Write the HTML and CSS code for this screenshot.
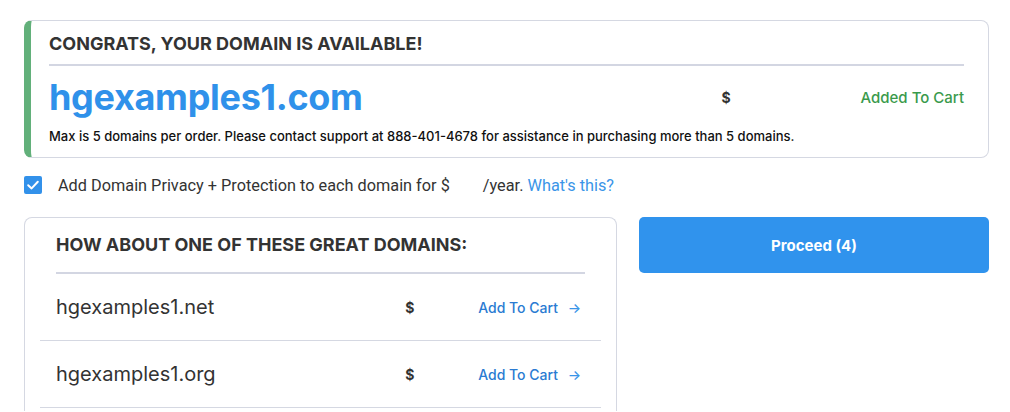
FILE: index.html
```html
<!DOCTYPE html>
<html>
<head>
  <meta charset="UTF-8" />
  <title>Domain Search</title>
  <link rel="stylesheet" href="styles.css">
</head>
<body>
  <div class="page">
    <div class="result-card">
      <h2 class="card-title">CONGRATS, YOUR DOMAIN IS AVAILABLE!</h2>
      <div class="result-row">
        <span class="domain-name">hgexamples1.com</span>
        <span class="price">$</span>
        <span class="added">Added To Cart</span>
      </div>
      <p class="limit-note">Max is 5 domains per order. Please contact support at 888-401-4678 for assistance in purchasing more than 5 domains.</p>
    </div>

    <label class="privacy">
      <span class="checkbox">
        <svg width="18" height="18" viewBox="0 0 18 18">
          <rect width="18" height="18" rx="2" fill="#3291ea" />
          <path d="M4.2 9.2 L7.6 12.4 L13.8 5.8" stroke="#fff" stroke-width="2" fill="none" stroke-linecap="round" stroke-linejoin="round" />
        </svg>
      </span>
      <span class="privacy-text">Add Domain Privacy + Protection to each domain for $<span class="gap"></span>/year. <a href="#">What's this?</a></span>
    </label>

    <div class="bottom">
      <div class="suggest-card">
        <h2 class="suggest-title">HOW ABOUT ONE OF THESE GREAT DOMAINS:</h2>
        <div class="suggest-row">
          <span class="suggest-name">hgexamples1.net</span>
          <span class="suggest-price">$</span>
          <a href="#" class="add-link">Add To Cart <span class="arrow">&rarr;</span></a>
        </div>
        <div class="suggest-row">
          <span class="suggest-name">hgexamples1.org</span>
          <span class="suggest-price">$</span>
          <a href="#" class="add-link">Add To Cart <span class="arrow">&rarr;</span></a>
        </div>
      </div>
      <div class="side">
        <button class="proceed-btn">Proceed (4)</button>
      </div>
    </div>
  </div>
</body>
</html>
```

FILE: styles.css
```css
body {
  margin: 0;
  font-family: Inter, "Noto Sans", sans-serif;
  background: #fff;
  color: #222;
}
.page {
  padding: 20px 21px 0 24px;
}
.result-card {
  border: 1px solid #d5d8e2;
  border-left: 7px solid #62b07a;
  border-radius: 8px;
  padding: 12px 24px 13px 18px;
}
.card-title {
  margin: 0;
  padding-bottom: 10px;
  border-bottom: 2px solid #d3d6e2;
  font-size: 18px;
  font-weight: 700;
  color: #333;
}
.result-row {
  display: flex;
  align-items: center;
  height: 62px;
}
.domain-name {
  flex: 1;
  font-size: 36px;
  font-weight: 700;
  color: #2f91ea;
  letter-spacing: -0.3px;
}
.price {
  width: 139px;
  font-size: 14px;
  font-weight: 700;
  color: #333;
}
.added {
  font-size: 15px;
  font-weight: 500;
  color: #3a9a4c;
}
.limit-note {
  margin: 0;
  font-size: 13px;
  font-weight: 500;
  color: #111;
}
.privacy {
  display: flex;
  align-items: center;
  margin: 17px 0 0;
  height: 20px;
}
.checkbox {
  display: flex;
  margin-right: 16px;
}
.privacy-text {
  font-family: Roboto, sans-serif;
  font-size: 16.3px;
  color: #333;
}
.gap {
  display: inline-block;
  width: 33px;
}
.privacy-text a {
  color: #3a95e8;
  text-decoration: none;
}
.bottom {
  display: flex;
  gap: 22px;
  margin-top: 22px;
}
.suggest-card {
  width: 561px;
  height: 177px;
  border: 1px solid #d5d8e2;
  border-bottom: none;
  border-radius: 8px 8px 0 0;
  padding: 16px 15px 0 15px;
}
.suggest-title {
  margin: 0 16px;
  padding-bottom: 17px;
  border-bottom: 2px solid #d3d6e2;
  font-size: 18px;
  font-weight: 700;
  color: #333;
}
.suggest-row {
  display: flex;
  align-items: center;
  height: 66px;
  padding: 0 20px 0 16px;
  border-bottom: 1px solid #d5d8e2;
}
.suggest-name {
  flex: 1;
  font-size: 20px;
  color: #333;
}
.suggest-price {
  width: 73px;
  font-size: 14px;
  font-weight: 700;
  color: #333;
}
.add-link {
  font-size: 14px;
  font-weight: 500;
  color: #2a7bd2;
  text-decoration: none;
}
.arrow {
  margin-left: 6px;
  color: #3a95e8;
}
.side {
  flex: 1;
}
.proceed-btn {
  width: 100%;
  height: 56px;
  border: none;
  border-radius: 5px;
  background: #3093ed;
  color: #fff;
  font-family: Inter, sans-serif;
  font-size: 15px;
  font-weight: 700;
  cursor: pointer;
}
```
